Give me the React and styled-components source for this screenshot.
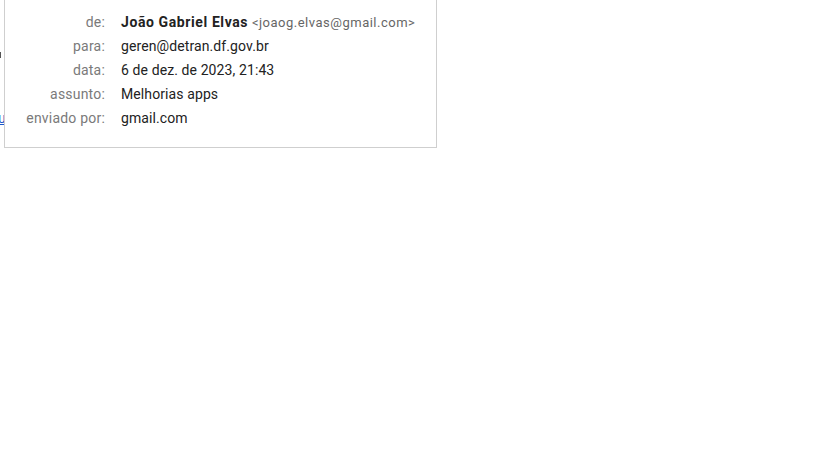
import styled, { createGlobalStyle } from "styled-components"

const GlobalStyle = createGlobalStyle`
html, body {
    margin: 0;
    padding: 0;
    background: #ffffff;
}
body {
    width: 816px;
    height: 460px;
    overflow: hidden;
    font-family: Roboto, "Liberation Sans", Arial, sans-serif;
}
`

const details = [
    { label: "de:", value: "João Gabriel Elvas", extra: "<joaog.elvas@gmail.com>" },
    { label: "para:", value: "geren@detran.df.gov.br" },
    { label: "data:", value: "6 de dez. de 2023, 21:43" },
    { label: "assunto:", value: "Melhorias apps" },
    { label: "enviado por:", value: "gmail.com" },
]

export default function App() {
    return (
        <>
            <GlobalStyle />
            <Screen>
                <Behind>
                    <Dot />
                    <HiddenLink href="#">u</HiddenLink>
                </Behind>

                <Popup>
                    <Grid>
                        {details.map((d) => (
                            <Row key={d.label}>
                                <Label>{d.label}</Label>
                                <Value $bold={!!d.extra}>
                                    {d.value}
                                    {d.extra && <Email> {d.extra}</Email>}
                                </Value>
                            </Row>
                        ))}
                    </Grid>
                </Popup>
            </Screen>
        </>
    )
}

const Screen = styled.div`
position: relative;
width: 816px;
height: 460px;
`

const Behind = styled.div`
display: flex;
flex-direction: column;
align-items: flex-start;
padding-top: 52px;
margin-left: -2px;
`

const Dot = styled.span`
width: 3px;
height: 6px;
background: #555;
margin-bottom: 52px;
`

const HiddenLink = styled.a`
color: #1a55c8;
font-size: 14px;
`

const Popup = styled.div`
position: absolute;
left: 4px;
top: -11px;
width: 431px;
padding: 20px 0 17px 0;
background: #ffffff;
border: 1px solid #cfcfcf;
`

const Grid = styled.div`
display: grid;
grid-template-columns: 100px 1fr;
grid-auto-rows: 24px;
column-gap: 16px;
`

const Row = styled.div`
display: contents;
font-size: 14px;
line-height: 24px;
`

const Label = styled.span`
text-align: right;
color: #7a7a7a;
letter-spacing: 0.2px;
`

const Value = styled.span`
color: #222222;
letter-spacing: ${(p) => (p.$bold ? "0.6px" : "0.1px")};
white-space: nowrap;
font-weight: ${(p) => (p.$bold ? 700 : 400)};
`

const Email = styled.span`
color: #666666;
font-weight: 400;
font-size: 13px;
line-height: 0;
letter-spacing: 0.5px;
`
